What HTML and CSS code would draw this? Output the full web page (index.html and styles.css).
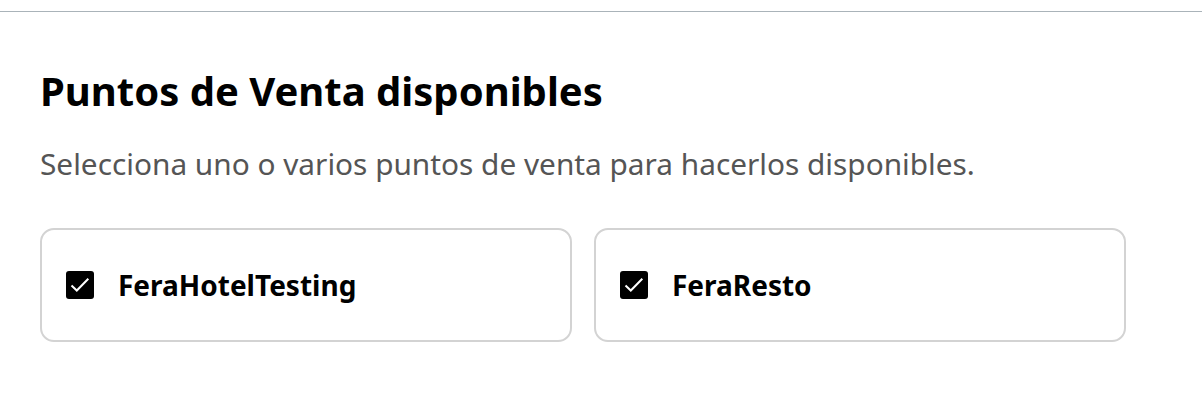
FILE: index.html
```html
<!DOCTYPE html>
<html lang="es">
<head>
<meta charset="utf-8">
<title>Puntos de Venta</title>
<link rel="stylesheet" href="styles.css">
</head>
<body>
<div class="topbar"></div>
<section class="panel">
  <h2 class="title">Puntos de Venta disponibles</h2>
  <p class="subtitle">Selecciona uno o varios puntos de venta para hacerlos disponibles.</p>
  <div class="cards">
    <label class="card">
      <span class="check">
        <svg viewBox="0 0 28 28" width="28" height="28"><rect x="0" y="0" width="28" height="28" rx="3" fill="#000"/><path d="M5.5 14.5 L10.8 19.5 L22.3 7.8" fill="none" stroke="#fff" stroke-width="2"/></svg>
      </span>
      <span class="name">FeraHotelTesting</span>
    </label>
    <label class="card">
      <span class="check">
        <svg viewBox="0 0 28 28" width="28" height="28"><rect x="0" y="0" width="28" height="28" rx="3" fill="#000"/><path d="M5.5 14.5 L10.8 19.5 L22.3 7.8" fill="none" stroke="#fff" stroke-width="2"/></svg>
      </span>
      <span class="name">FeraResto</span>
    </label>
  </div>
</section>
</body>
</html>
```

FILE: styles.css
```css
html, body {
  margin: 0;
  padding: 0;
  background: #fff;
  font-family: "Noto Sans", "Open Sans", sans-serif;
  color: #000;
}
.topbar {
  margin-top: 11px;
  height: 1px;
  background: #aab3b9;
}
.panel {
  padding: 0 40px;
}
.title {
  margin: 0;
  padding-top: 52px;
  font-size: 40px;
  font-weight: 700;
  line-height: 54px;
}
.subtitle {
  margin: 26px 0 0;
  font-size: 29.8px;
  line-height: 40px;
  color: #555;
}
.cards {
  display: flex;
  gap: 22px;
  margin-top: 44px;
}
.card {
  box-sizing: border-box;
  width: 532px;
  height: 114px;
  border: 2px solid #d3d3d3;
  border-radius: 14px;
  display: flex;
  align-items: center;
  padding-left: 24px;
  gap: 24px;
}
.check {
  display: flex;
  width: 28px;
  height: 28px;
}
.name {
  font-size: 28px;
  font-weight: 700;
}
```
